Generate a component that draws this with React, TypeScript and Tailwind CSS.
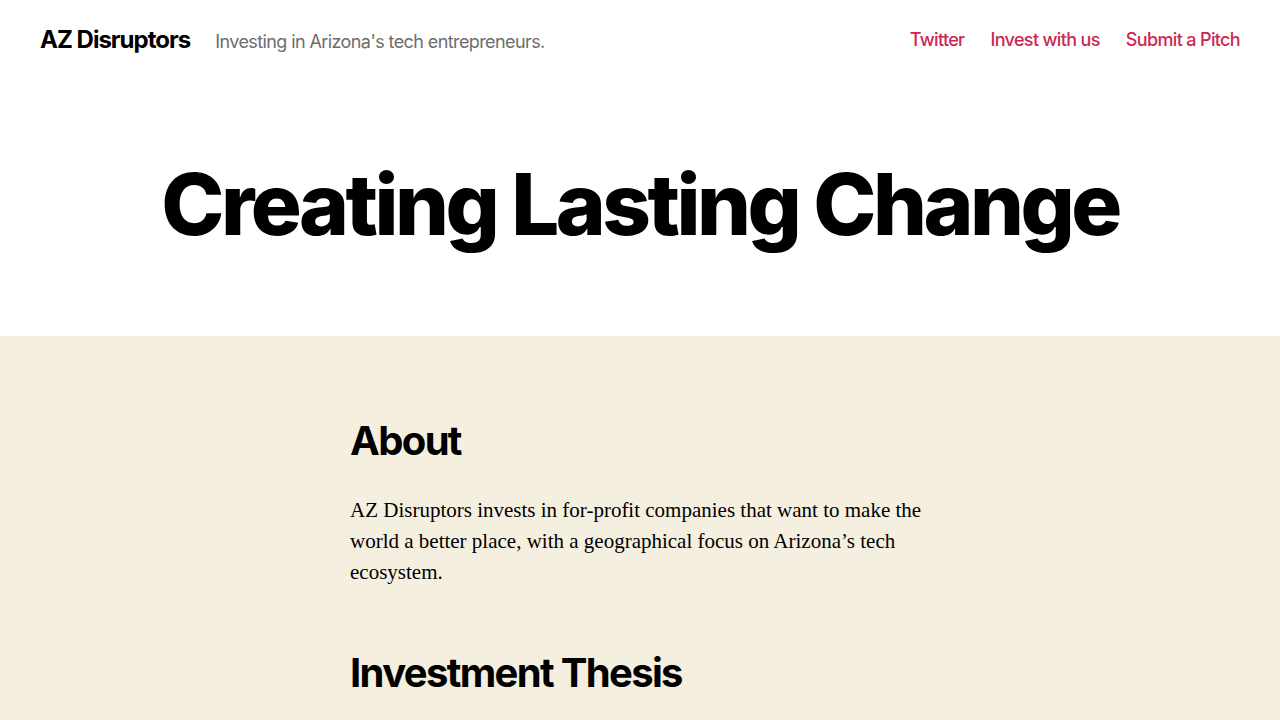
import React from 'react'

const navLinks = ['Twitter', 'Invest with us', 'Submit a Pitch']

function SiteHeader() {
	return (
		<header className="flex h-[80px] items-center justify-between px-10">
			<div className="flex items-baseline gap-[25px]">
				<a
					href="#"
					className="text-[24px] font-bold leading-none tracking-[-0.0415em] text-black"
				>
					AZ Disruptors
				</a>
				<p className="text-[18px] leading-none tracking-[-0.033em] text-[#6d6d6d]">
					Investing in Arizona's tech entrepreneurs.
				</p>
			</div>
			<nav className="flex items-center gap-[26px]">
				{navLinks.map((link) => (
					<a
						key={link}
						href="#"
						className="text-[18px] font-medium leading-none tracking-[-0.036em] text-[#cd2653]"
					>
						{link}
					</a>
				))}
			</nav>
		</header>
	)
}

export default function App() {
	return (
		<div className="min-h-screen bg-white font-['Inter',sans-serif] text-black">
			<SiteHeader />
			<div className="flex h-[256px] justify-center pt-[77px]">
				<h1 className="text-[85px] font-extrabold leading-[1.138] tracking-[-0.0415em]">
					Creating Lasting Change
				</h1>
			</div>
			<main className="bg-[#f5efe0] pb-20 pt-20">
				<div className="mx-auto w-[580px]">
					<h2 className="mb-[29px] text-[40px] font-bold leading-[1.25] tracking-[-0.0415em]">
						About
					</h2>
					<p className="font-['Liberation_Serif',serif] text-[21px] leading-[1.476]">
						AZ Disruptors invests in for-profit companies that want to make the
						world a better place, with a geographical focus on Arizona’s tech
						ecosystem.
					</p>
					<h2 className="mb-[28px] mt-[60px] text-[40px] font-bold leading-[1.25] tracking-[-0.0415em]">
						Investment Thesis
					</h2>
				</div>
			</main>
		</div>
	)
}
